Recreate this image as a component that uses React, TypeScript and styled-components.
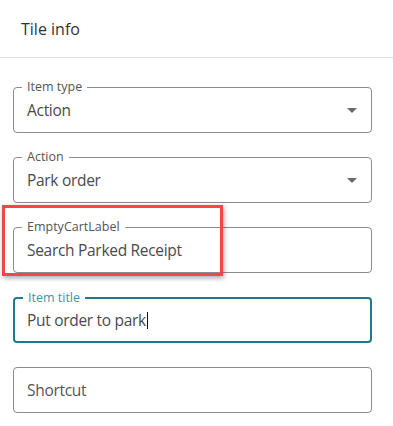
import styled, { createGlobalStyle } from 'styled-components';

const GlobalStyle = createGlobalStyle`
    body {
        margin: 0;
        background: #fff;
        font-family: "Open Sans", "Noto Sans", sans-serif;
    }
`;

const Panel = styled.div`
    width: 393px;
    height: 426px;
    position: relative;
    background: #fff;
    overflow: hidden;
`;

const Header = styled.div`
    height: 58px;
    display: flex;
    align-items: center;
    padding-left: 21px;
    border-bottom: 1px solid #e2e2e2;
    font-size: 16px;
    color: #333;
    box-sizing: border-box;
`;

const Form = styled.div`
    display: flex;
    flex-direction: column;
    gap: 24px;
    padding: 29px 21px 0 13px;
`;

const Field = styled.div<{ $focused?: boolean }>`
    position: relative;
    height: 46px;
    box-sizing: border-box;
    display: flex;
    align-items: center;
    border: ${(p) => (p.$focused ? '2px solid #1e7b8a' : '1px solid #8c8c8c')};
    padding: 0 13px 0 ${(p) => (p.$focused ? '12px' : '13px')};
    border-radius: 4px;
`;

const Label = styled.span<{ $focused?: boolean }>`
    position: absolute;
    top: -8px;
    left: 8px;
    padding: 0 5px;
    background: #fff;
    font-size: 12.5px;
    line-height: 14px;
    color: ${(p) => (p.$focused ? '#3c98a7' : '#555')};
`;

const Value = styled.span`
    flex: 1;
    font-size: 15.5px;
    letter-spacing: -0.3px;
    color: #4a4a4a;
    display: flex;
    align-items: center;
`;

const Placeholder = styled(Value)`
    color: #555;
`;

const Caret = styled.span`
    display: inline-block;
    width: 1px;
    height: 17px;
    background: #111;
    margin-left: 1px;
`;

const Arrow = styled.span`
    width: 0;
    height: 0;
    border-left: 5px solid transparent;
    border-right: 5px solid transparent;
    border-top: 5px solid #6b6b6b;
    margin-right: 1px;
`;

const Highlight = styled.div`
    position: absolute;
    left: 2px;
    top: 205px;
    width: 215px;
    height: 65px;
    border: 3px solid #f2474a;
    box-shadow: 1px 2px 5px rgba(0, 0, 0, 0.35);
    pointer-events: none;
`;

const App: React.FC = () => {
    return (
        <Panel>
            <GlobalStyle />
            <Header>Tile info</Header>
            <Form>
                <Field>
                    <Label>Item type</Label>
                    <Value>Action</Value>
                    <Arrow />
                </Field>
                <Field>
                    <Label>Action</Label>
                    <Value>Park order</Value>
                    <Arrow />
                </Field>
                <Field>
                    <Label>EmptyCartLabel</Label>
                    <Value>Search Parked Receipt</Value>
                </Field>
                <Field $focused>
                    <Label $focused>Item title</Label>
                    <Value>
                        Put order to park
                        <Caret />
                    </Value>
                </Field>
                <Field>
                    <Placeholder>Shortcut</Placeholder>
                </Field>
            </Form>
            <Highlight />
        </Panel>
    );
};

export default App;
